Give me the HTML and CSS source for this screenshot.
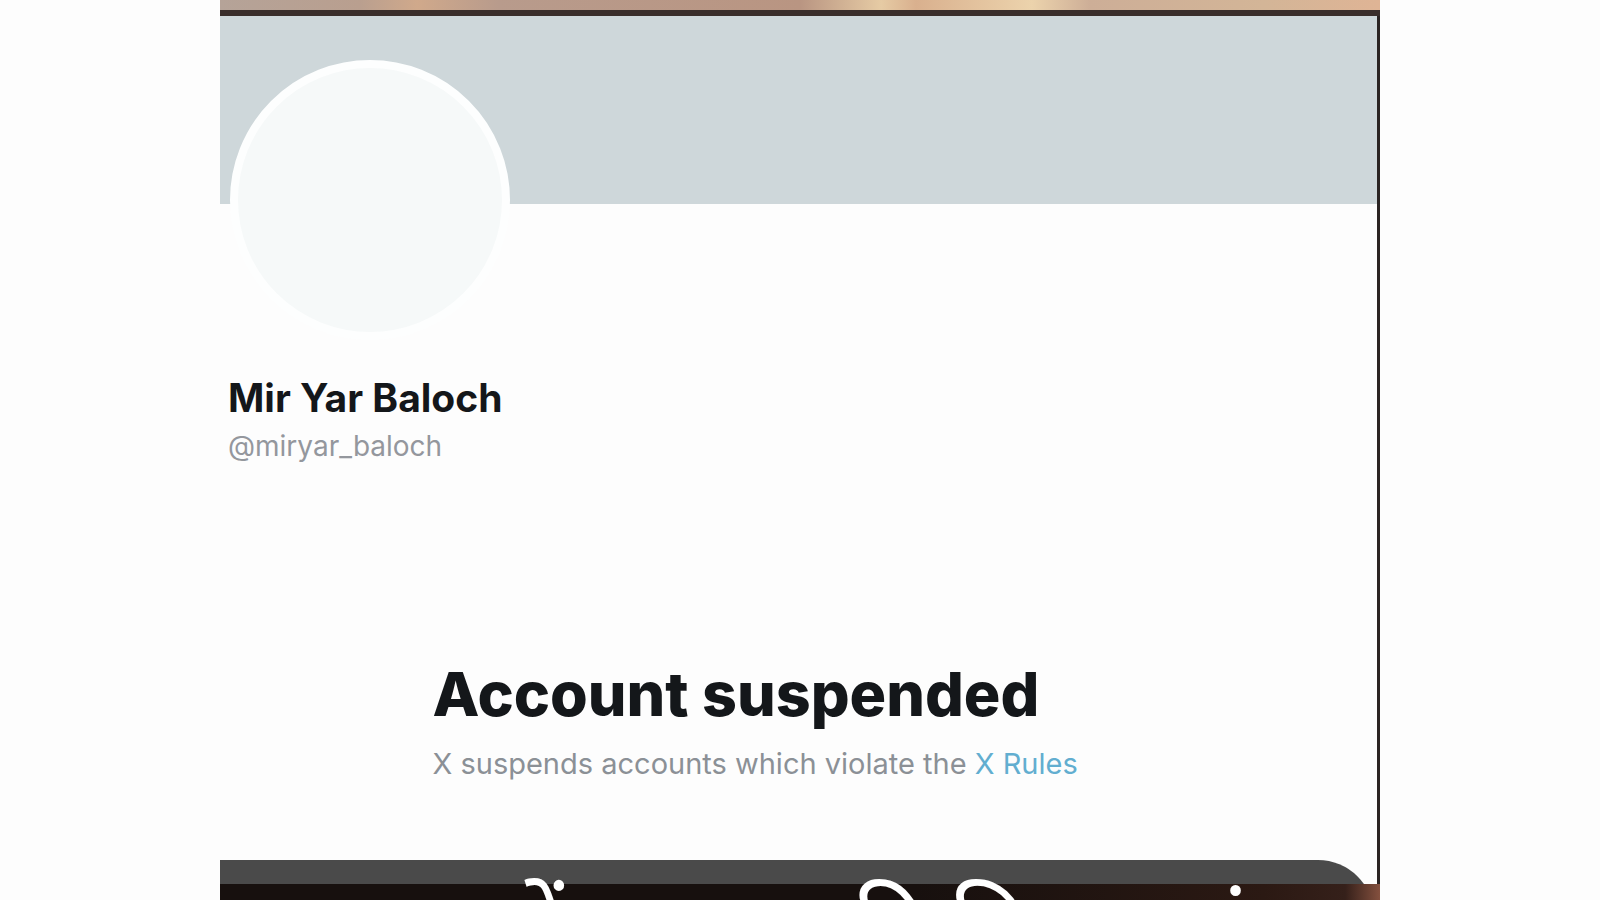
FILE: index.html
```html
<!DOCTYPE html>
<html lang="en">

<head>
    <meta charset="UTF-8" />
    <meta name="viewport" content="width=device-width, initial-scale=1.0" />
    <title>Account suspended</title>
    <link rel="stylesheet" href="styles.css">
</head>

<body>
    <main class="frame">
        <div class="photo-top"></div>

        <div class="profile">
            <div class="banner"></div>
            <div class="avatar"></div>

            <div class="user">
                <h2>Mir Yar Baloch</h2>
                <p>@miryar_baloch</p>
            </div>

            <div class="notice">
                <h1>Account suspended</h1>
                <p>X suspends accounts which violate the <a href="#">X Rules</a></p>
            </div>
        </div>

        <div class="caption">
            <div class="caption-top">
                <div class="caption-bar"></div>
            </div>
            <div class="caption-photo"></div>
            <p class="caption-text" lang="hi">
                <span>में</span>
                <span>की</span>
                <span>हि</span>
                <span>सं</span>
            </p>
        </div>
    </main>
</body>

</html>
```

FILE: styles.css
```css
* {
    box-sizing: border-box;
}

body {
    font-family: Inter, "Noto Sans", sans-serif;
    margin: 0;
    background-color: #fdfdfd;
    color: #14171a;
}

h1,
h2,
p {
    margin: 0;
}

.frame {
    width: 72.5%;
    height: 100vh;
    margin: 0 auto;
    display: flex;
    flex-direction: column;
    overflow: hidden;
}

.photo-top {
    height: 16px;
    flex-shrink: 0;
    border-bottom: 6px solid #3a2e2b;
    background: linear-gradient(90deg, #b5a398 0%, #b99f8f 12%, #d0a98b 17%, #b89b8c 24%, #b99582 50%, #e6cba4 57%, #d9b08e 60%, #ecd3ac 70%, #cdae97 75%, #d3b597 90%, #dfb495 100%);
}

.profile {
    flex: 1;
    border-right: 3px solid #2b2423;
}

.banner {
    height: 188px;
    background: #ced7da;
}

.avatar {
    width: 280px;
    height: 280px;
    margin: -144px 0 0 10px;
    border: 8px solid #fdfefe;
    border-radius: 50%;
    background: #f6f9f9;
}

.user {
    margin: 32px 0 0 8px;
}

.user h2 {
    font-size: 39px;
    line-height: 52px;
}

.user p {
    font-size: 28px;
    line-height: 44px;
    color: #94979d;
}

.notice {
    width: 732px;
    margin: 188px auto 0;
}

.notice h1 {
    font-size: 61px;
    font-weight: 800;
    line-height: 76px;
}

.notice p {
    font-size: 29px;
    line-height: 64px;
    color: #8b9096;
}

.notice a {
    color: #62aed0;
    text-decoration: none;
}

.caption {
    position: relative;
    flex-shrink: 0;
    height: 40px;
    overflow: hidden;
}

.caption-top {
    height: 24px;
    padding-right: 3px;
    border-right: 3px solid #2b2423;
    overflow: hidden;
}

.caption-bar {
    height: 80px;
    border-radius: 0 56px 0 0;
    background: #4a4a4a;
}

.caption-photo {
    height: 16px;
    background: linear-gradient(90deg, #17100e 0%, #17100e 60%, #2b1913 90%, #35201a 97%, #84503e 100%);
}

/* only the tops of the letters show above the fold */
.caption-text {
    position: absolute;
    top: 18px;
    left: 287px;
    display: grid;
    grid-template-columns: 320px 124px 232px 80px;
    font-family: "Noto Sans", sans-serif;
    font-size: 96px;
    line-height: 100px;
    color: #fff;
}
```
